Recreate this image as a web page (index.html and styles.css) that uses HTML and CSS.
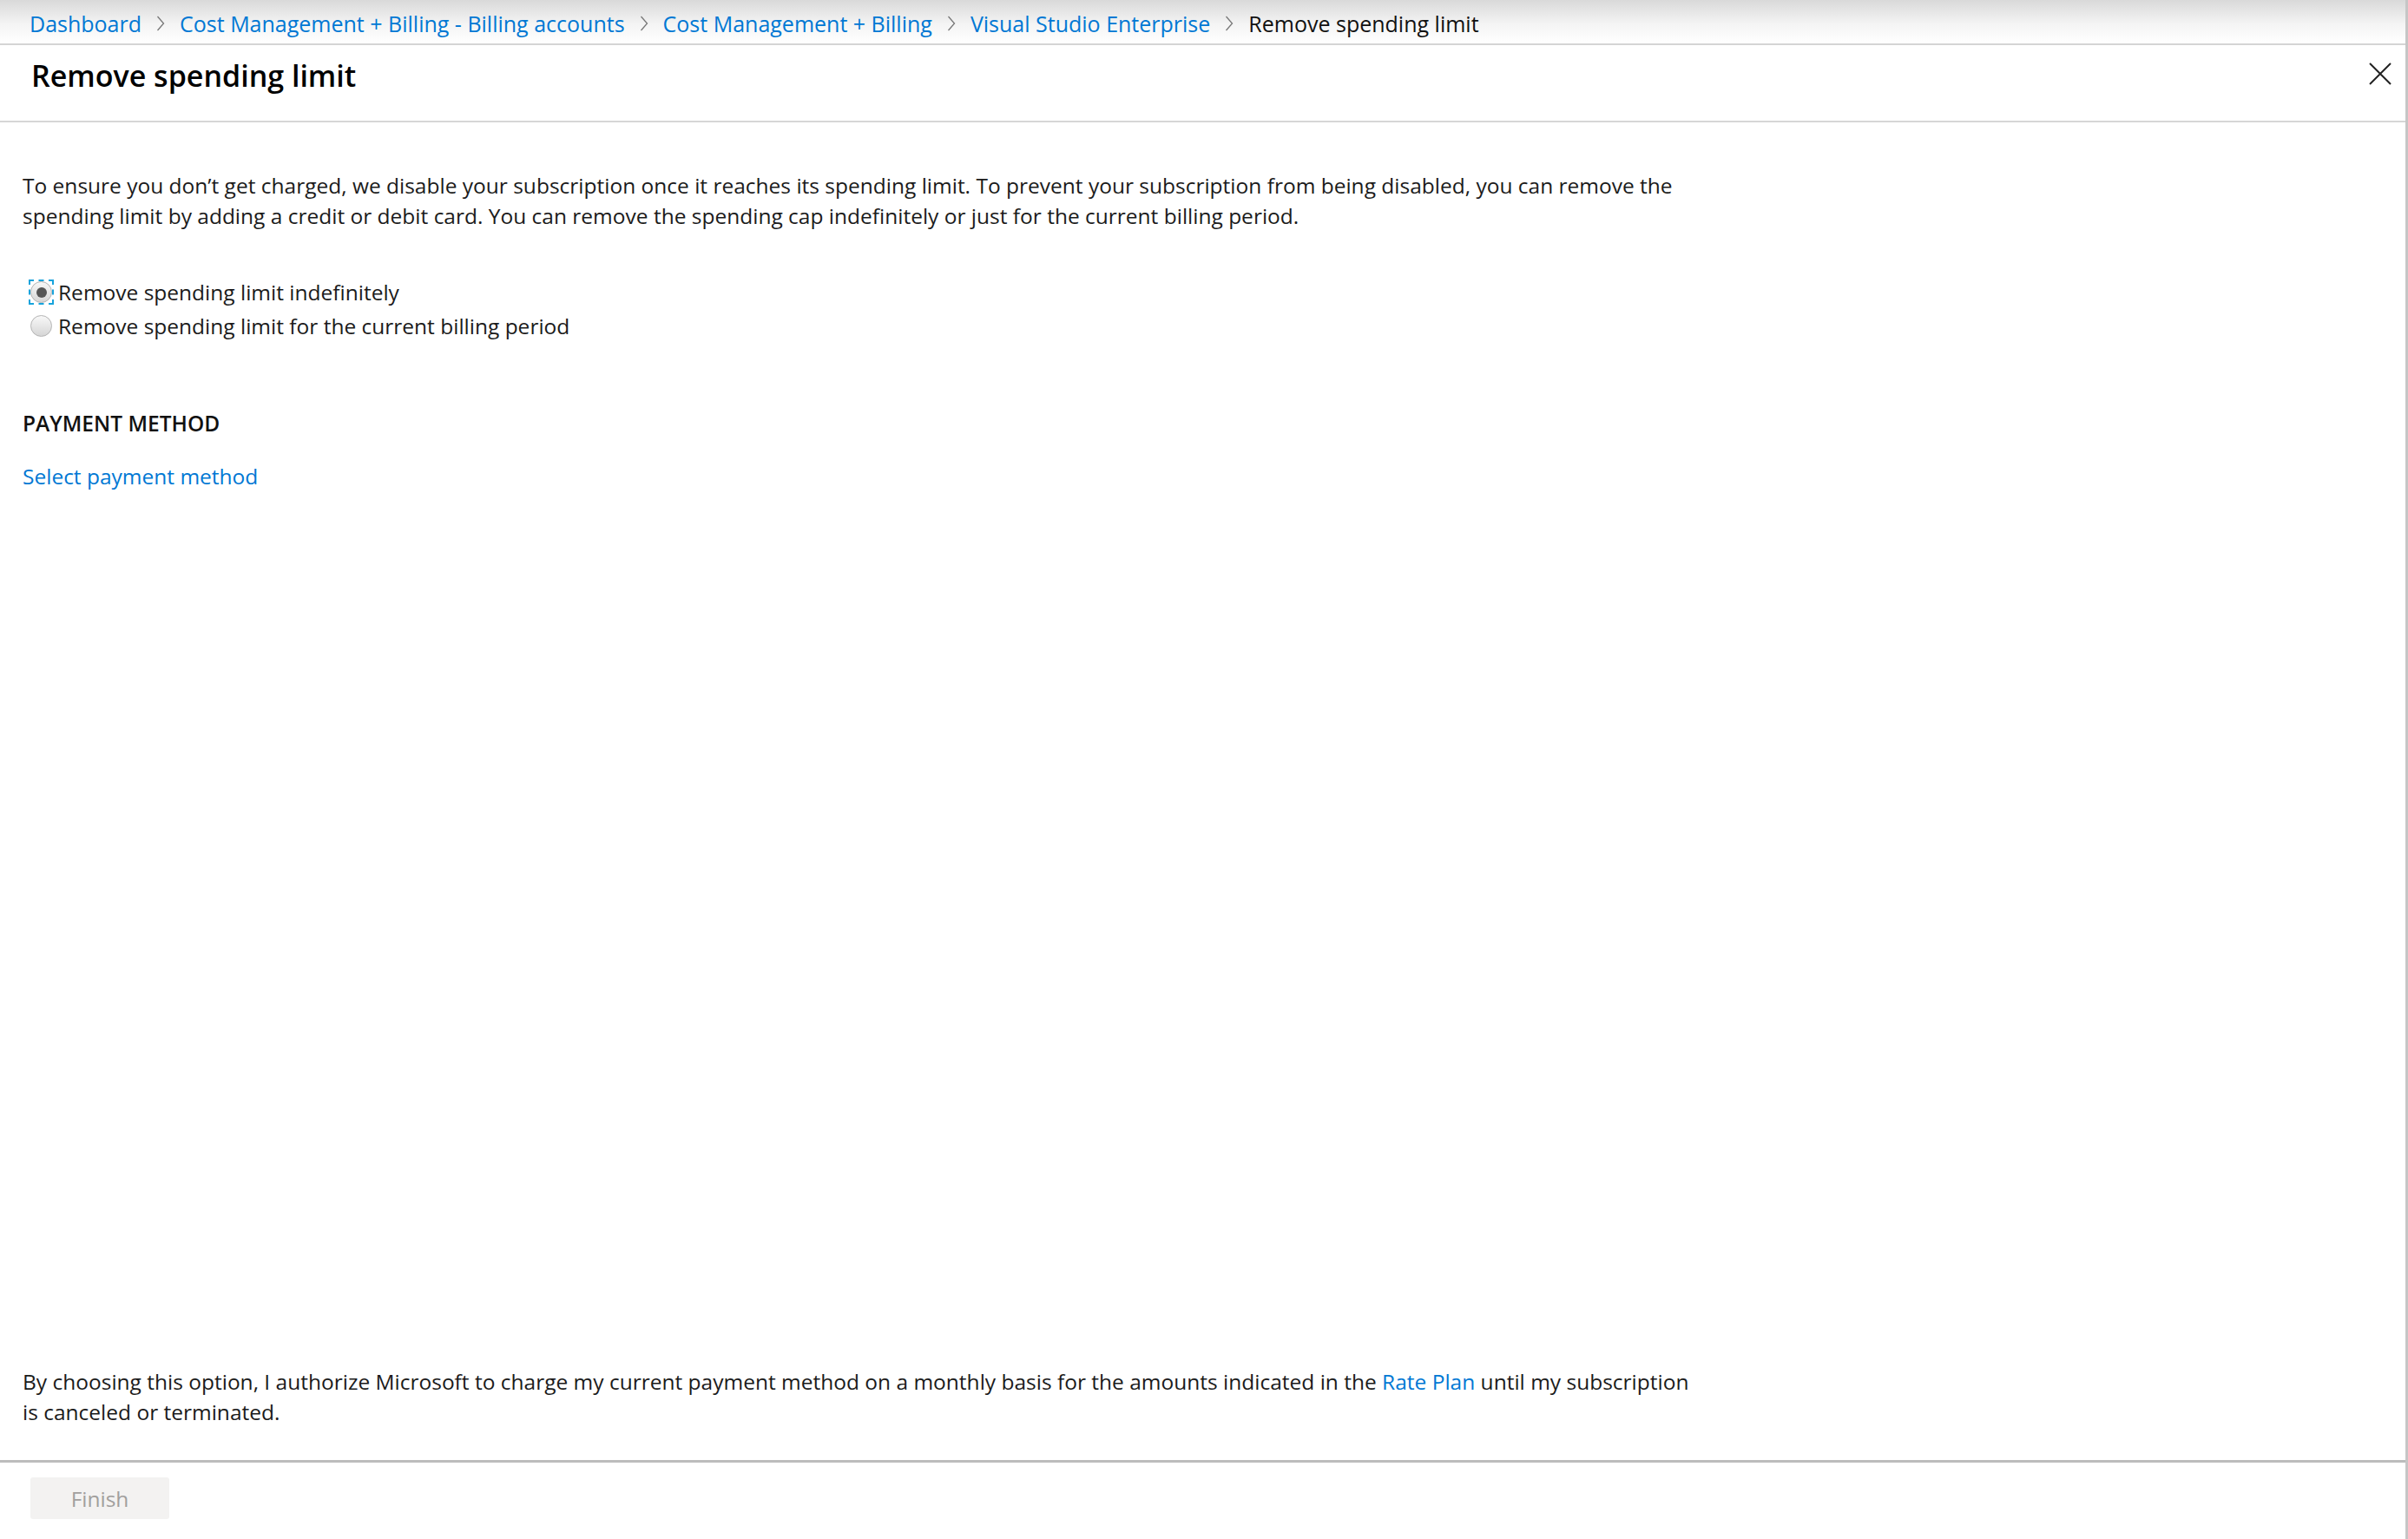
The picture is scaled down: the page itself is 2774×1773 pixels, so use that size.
FILE: index.html
```html
<!DOCTYPE html>
<html lang="en">
<head>
    <meta charset="UTF-8">
    <meta name="viewport" content="width=device-width, initial-scale=1.0">
    <title>Remove spending limit</title>
    <link rel="stylesheet" href="styles.css">
</head>
<body>
    <div class="page">
        <nav class="breadcrumb">
            <a href="#">Dashboard</a>
            <span class="chevron"></span>
            <a href="#">Cost Management + Billing - Billing accounts</a>
            <span class="chevron"></span>
            <a href="#">Cost Management + Billing</a>
            <span class="chevron"></span>
            <a href="#">Visual Studio Enterprise</a>
            <span class="chevron"></span>
            <span class="current">Remove spending limit</span>
        </nav>

        <header class="blade-header">
            <h1>Remove spending limit</h1>
            <button class="close" title="Close">
                <svg width="26" height="26" viewBox="0 0 26 26">
                    <path d="M1 1 L25 25 M25 1 L1 25" stroke="#222" stroke-width="2" fill="none"/>
                </svg>
            </button>
        </header>

        <main class="blade-content">
            <p class="intro">To ensure you don’t get charged, we disable your subscription once it reaches its spending limit. To prevent your subscription from being disabled, you can remove the spending limit by adding a credit or debit card. You can remove the spending cap indefinitely or just for the current billing period.</p>

            <div class="options">
                <label class="option">
                    <span class="radio checked focused"><span class="dot"></span></span>
                    Remove spending limit indefinitely
                </label>
                <label class="option">
                    <span class="radio"></span>
                    Remove spending limit for the current billing period
                </label>
            </div>

            <h2 class="section-title">PAYMENT METHOD</h2>
            <a href="#" class="select-link">Select payment method</a>

            <p class="terms">By choosing this option, I authorize Microsoft to charge my current payment method on a monthly basis for the amounts indicated in the <a href="#">Rate Plan</a> until my subscription is canceled or terminated.</p>
        </main>

        <footer class="blade-footer">
            <button class="finish" disabled>Finish</button>
        </footer>
    </div>
</body>
</html>
```

FILE: styles.css
```css
html, body {
    margin: 0;
    height: 100%;
}
body {
    font-family: "Segoe UI", "Open Sans", sans-serif;
    font-size: 24.5px;
    color: #1b1b1b;
    background: #fff;
}
.page {
    display: flex;
    flex-direction: column;
    height: 100%;
    border-right: 3px solid #c6c6c6;
    box-sizing: border-box;
}
a {
    color: #0078d4;
    text-decoration: none;
}
.breadcrumb {
    height: 52px;
    display: flex;
    align-items: center;
    padding: 3px 0 0 34px;
    box-sizing: border-box;
    font-size: 25px;
    background: linear-gradient(#d9d9d9, #f4f4f4 55%, #fff);
    border-bottom: 2px solid #d4d4d4;
    white-space: nowrap;
}
.breadcrumb .current {
    color: #111;
}
.chevron {
    width: 10px;
    height: 20px;
    margin: 0 17px;
    background: no-repeat center url("data:image/svg+xml;utf8,<svg xmlns='http://www.w3.org/2000/svg' width='10' height='20' viewBox='0 0 10 20'><path d='M1.5 2 L8.5 10 L1.5 18' stroke='%23777' stroke-width='1.3' fill='none'/></svg>");
}
.blade-header {
    height: 87px;
    display: flex;
    justify-content: space-between;
    align-items: flex-start;
    padding: 0 16px 0 36px;
    border-bottom: 2px solid #d6d6d6;
}
h1 {
    margin: 12px 0 0;
    font-size: 34px;
    font-weight: 600;
    color: #000;
}
.close {
    margin-top: 20px;
    border: none;
    background: none;
    padding: 0;
}
.blade-content {
    flex: 1;
    display: flex;
    flex-direction: column;
    padding: 0 26px;
}
.intro, .terms {
    max-width: 1930px;
    line-height: 35px;
    margin: 0;
}
.intro {
    margin-top: 55px;
}
.options {
    margin-top: 51px;
    display: flex;
    flex-direction: column;
}
.option {
    display: flex;
    align-items: center;
    height: 39px;
    padding-left: 9px;
}
.radio {
    position: relative;
    width: 23px;
    height: 23px;
    border-radius: 50%;
    border: 1px solid #b4b4b4;
    background: linear-gradient(#f8f8f8, #d6d6d6);
    margin-right: 7px;
    display: flex;
    align-items: center;
    justify-content: center;
    flex-shrink: 0;
}
.radio .dot {
    width: 12px;
    height: 12px;
    border-radius: 50%;
    background: #555;
}
.radio.focused::after {
    content: "";
    position: absolute;
    left: -3px;
    top: -3px;
    right: -3px;
    bottom: -3px;
    border: 2px dashed #17a3dc;
}
.section-title {
    margin: 75px 0 0;
    font-size: 24.5px;
    font-weight: 600;
    line-height: 35px;
    color: #111;
}
.select-link {
    align-self: flex-start;
    margin-top: 26px;
    line-height: 35px;
}
.terms {
    margin-top: auto;
    margin-bottom: 38px;
}
.blade-footer {
    height: 91px;
    border-top: 3px solid #bcbcbc;
    padding: 17px 0 0 35px;
    box-sizing: border-box;
}
.finish {
    width: 160px;
    height: 48px;
    border: none;
    border-radius: 3px;
    background: #f3f2f1;
    color: #a19f9d;
    font-family: inherit;
    font-size: 24.5px;
}
```
